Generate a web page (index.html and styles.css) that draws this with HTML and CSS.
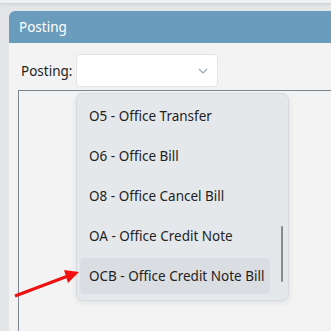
FILE: index.html
```html
<!DOCTYPE html>
<html lang="en">
<head>
    <meta charset="UTF-8">
    <meta name="viewport" content="width=device-width, initial-scale=1.0">
    <title>Posting</title>
    <link rel="stylesheet" href="styles.css">
</head>
<body>
    <div class="topbar"></div>

    <div class="panel">
        <div class="panel-header">Posting</div>

        <div class="form-row">
            <label>Posting:</label>
            <div class="select">
                <svg class="chevron" width="10" height="6" viewBox="0 0 10 6">
                    <polyline points="1,1 5,5 9,1" fill="none" stroke="#9aa7b4" stroke-width="1.2"/>
                </svg>
            </div>
        </div>

        <div class="grid-box"></div>
    </div>

    <!-- open dropdown list -->
    <div class="dropdown">
        <div class="item">O5 - Office Transfer</div>
        <div class="item">O6 - Office Bill</div>
        <div class="item">O8 - Office Cancel Bill</div>
        <div class="item">OA - Office Credit Note</div>
        <div class="item selected">OCB - Office Credit Note Bill</div>
        <div class="scrollbar"></div>
    </div>

    <svg class="arrow" width="331" height="331" viewBox="0 0 331 331">
        <line x1="15" y1="296" x2="68" y2="276" stroke="#f01010" stroke-width="3"/>
        <polygon points="79,272 64,270 68,283" fill="#f01010"/>
    </svg>
</body>
</html>
```

FILE: styles.css
```css
body {
    font-family: "Noto Sans", "Open Sans", sans-serif;
    background-color: #e3e5e7;
    margin: 0;
    padding: 0;
    width: 331px;
    height: 331px;
    overflow: hidden;
    position: relative;
}

.topbar {
    height: 3px;
    background: #eef0f1;
    box-shadow: 0 1px 3px rgba(0, 0, 0, 0.12);
}

.panel {
    margin: 8px 0 0 9px;
    height: 320px;
    background: #f3f3f3;
    border-radius: 6px 0 0 0;
    overflow: hidden;
}

.panel-header {
    height: 32px;
    line-height: 32px;
    padding-left: 10px;
    background: #6a9cbc;
    color: #fff;
    font-size: 13.5px;
}

.form-row {
    display: flex;
    align-items: center;
    padding: 11px 0 0 12px;
}

.form-row label {
    font-size: 13.5px;
    color: #222;
    width: 55px;
}

.select {
    width: 142px;
    height: 33px;
    background: #fff;
    border: 1px solid #e2e4e6;
    border-radius: 4px;
    box-sizing: border-box;
    display: flex;
    align-items: center;
    justify-content: flex-end;
    padding-right: 9px;
}

.grid-box {
    margin: 3px 0 0 9px;
    height: 260px;
    border-top: 1px solid #7b8792;
    border-left: 1px solid #7b8792;
}

.dropdown {
    position: absolute;
    left: 76px;
    top: 93px;
    width: 213px;
    height: 208px;
    box-sizing: border-box;
    padding: 4px 18px 0 3px;
    background: #e5e8eb;
    border: 1px solid #d6dade;
    border-radius: 7px;
    box-shadow: 0 2px 6px rgba(0, 0, 0, 0.08);
    display: flex;
    flex-direction: column;
    gap: 4px;
}

.item {
    height: 36px;
    line-height: 36px;
    padding-left: 9px;
    font-size: 13.5px;
    color: #222;
    border-radius: 4px;
    white-space: nowrap;
}

.item.selected {
    background: #dadde1;
}

.scrollbar {
    position: absolute;
    right: 5px;
    top: 132px;
    width: 2px;
    height: 56px;
    background: #8a8a8a;
    border-radius: 1px;
}

.arrow {
    position: absolute;
    left: 0;
    top: 0;
}
```
